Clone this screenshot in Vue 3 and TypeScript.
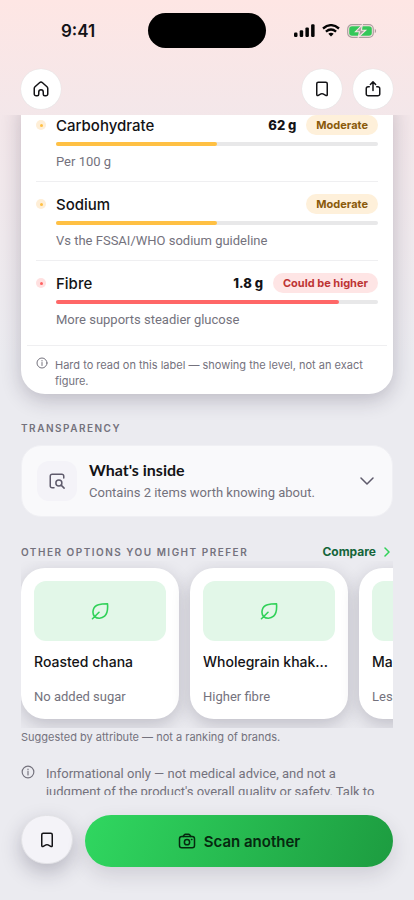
<script setup lang="ts">
type Tone = 'amber' | 'red'

interface Nutrient {
  name: string
  value: string
  level: string
  tone: Tone
  percent: number
  note: string
}

interface Option {
  name: string
  benefit: string
}

const nutrients: Nutrient[] = [
  { name: 'Carbohydrate', value: '62 g', level: 'Moderate', tone: 'amber', percent: 50, note: 'Per 100 g' },
  { name: 'Sodium', value: '', level: 'Moderate', tone: 'amber', percent: 50, note: 'Vs the FSSAI/WHO sodium guideline' },
  { name: 'Fibre', value: '1.8 g', level: 'Could be higher', tone: 'red', percent: 88, note: 'More supports steadier glucose' },
]

const options: Option[] = [
  { name: 'Roasted chana', benefit: 'No added sugar' },
  { name: 'Wholegrain khakhra', benefit: 'Higher fibre' },
  { name: 'Masala makhana', benefit: 'Less sodium' },
]
</script>

<template>
  <div class="screen">
    <header class="top">
      <div class="status">
        <span class="time">9:41</span>
        <span class="island"></span>
        <span class="signals">
          <svg width="21" height="13" viewBox="0 0 21 13" fill="#050505">
            <rect x="0" y="8.500" width="3.500" height="4.500" rx="1.2" />
            <rect x="5.700" y="6.200" width="3.500" height="6.800" rx="1.2" />
            <rect x="11.400" y="3.400" width="3.500" height="9.600" rx="1.2" />
            <rect x="17.100" y="0.200" width="3.500" height="12.800" rx="1.2" />
          </svg>
          <svg width="18" height="13" viewBox="0 0 18 13" fill="none" stroke="#050505" stroke-width="2.300">
            <path d="M1 4.500Q9-2.200 17 4.500" />
            <path d="M3.900 7.600Q9 3.400 14.100 7.600" />
            <path d="M6.300 9.700Q9 7.700 11.700 9.700L9 12.600Z" fill="#050505" stroke="none" />
          </svg>
          <svg width="30" height="14" viewBox="0 0 30 14">
            <rect x="0.700" y="0.700" width="25.600" height="12.600" rx="4.300" fill="none" stroke="#ad9fa0" stroke-width="1.200" />
            <path d="M27.800 4.800v4.400c1.800-.7 1.800-3.700 0-4.400z" fill="#ad9fa0" />
            <rect x="2.200" y="2.200" width="22.600" height="9.600" rx="2.800" fill="#34c759" />
            <path d="M15.300 0.800L8.500 7.700h4L11.300 13.200 18.700 6.200h-4.300z" fill="#ad9fa0" stroke="#f8e7e6" stroke-width="1.100" />
          </svg>
        </span>
      </div>
      <nav class="actions">
        <button class="round" type="button" aria-label="Home">
          <svg width="18" height="18" viewBox="0 0 24 24" class="line">
            <path d="M5.500 21H7a2 2 0 0 0 2-2v-3a3 3 0 0 1 6 0v3a2 2 0 0 0 2 2h1.500a2.500 2.500 0 0 0 2.500-2.500v-7.300a3 3 0 0 0-1-2.200l-6-5.400a3 3 0 0 0-4 0L4 9a3 3 0 0 0-1 2.200v7.300A2.500 2.500 0 0 0 5.500 21z" />
          </svg>
        </button>
        <span class="spacer"></span>
        <button class="round" type="button" aria-label="Save">
          <svg width="18" height="18" viewBox="0 0 24 24" class="line">
            <path d="M5 5a2 2 0 0 1 2-2h10a2 2 0 0 1 2 2v14.500a1.300 1.300 0 0 1-2 1.100l-3.600-2a3 3 0 0 0-2.800 0l-3.600 2a1.300 1.300 0 0 1-2-1.100z" />
          </svg>
        </button>
        <button class="round" type="button" aria-label="Share">
          <svg width="18" height="18" viewBox="0 0 24 24" class="line">
            <path d="M12 14V3M8.500 6L12 2.500 15.500 6M7 9H5.500A2.500 2.500 0 0 0 3 11.500v7A2.500 2.500 0 0 0 5.500 21h13a2.500 2.500 0 0 0 2.500-2.500v-7A2.500 2.500 0 0 0 18.500 9H17" />
          </svg>
        </button>
      </nav>
    </header>

    <main class="content">
      <section class="facts">
        <ul class="rows">
          <li v-for="n in nutrients" :key="n.name" class="row" :class="n.tone">
            <span class="dot"></span>
            <div class="detail">
              <div class="line-top">
                <span class="name">{{ n.name }}</span>
                <span v-if="n.value" class="value">{{ n.value }}</span>
                <span class="pill">{{ n.level }}</span>
              </div>
              <div class="track"><div class="fill" :style="{ width: n.percent + '%' }"></div></div>
              <p class="note">{{ n.note }}</p>
            </div>
          </li>
        </ul>
        <div class="caveat">
          <svg width="12" height="12" viewBox="0 0 24 24" class="line">
            <circle cx="12" cy="12" r="10" /><path d="M12 11v6M12 7v1" />
          </svg>
          <p>Hard to read on this label — showing the level, not an exact figure.</p>
        </div>
      </section>

      <h2 class="label transparency">TRANSPARENCY</h2>
      <button class="inside" type="button" aria-expanded="false">
        <span class="tile">
          <svg width="18" height="18" viewBox="0 0 24 24" class="line">
            <path d="M8 21H5.500A2.500 2.500 0 0 1 3 18.500v-13A2.500 2.500 0 0 1 5.500 3h13A2.500 2.500 0 0 1 21 5.500V8" />
            <circle cx="14.500" cy="14.500" r="4" /><path d="M17.500 17.500L21.500 21.500" />
          </svg>
        </span>
        <span class="inside-text">
          <span class="inside-title">What's inside</span>
          <span class="inside-sub">Contains 2 items worth knowing about.</span>
        </span>
        <svg class="line chevron" width="14" height="8" viewBox="0 0 14 8"><path d="M1 1l6 6 6-6" /></svg>
      </button>

      <div class="options-head">
        <h2 class="label">OTHER OPTIONS YOU MIGHT PREFER</h2>
        <a href="#compare" class="compare">Compare
          <svg width="6" height="10" viewBox="0 0 6 10"><path d="M1 1l4 4-4 4" /></svg>
        </a>
      </div>
      <div class="carousel">
        <article v-for="o in options" :key="o.name" class="option">
          <div class="thumb">
            <svg width="18" height="18" viewBox="0 0 18 18" class="line leaf">
              <path d="M1.500 16.700L8 10.300M3.600 14.600C.9 11.500 1.300 4.200 7.500 2.700 10.500 2 13.500 1.900 16.500 1.800 16.900 6.500 16.700 11.500 13.600 14.200 10.700 16.800 6.300 16.900 3.600 14.600" />
            </svg>
          </div>
          <h3>{{ o.name }}</h3>
          <p>{{ o.benefit }}</p>
        </article>
      </div>
      <p class="basis">Suggested by attribute — not a ranking of brands.</p>
      <div class="disclaimer">
        <svg width="14" height="14" viewBox="0 0 24 24" class="line">
          <circle cx="12" cy="12" r="10" /><path d="M12 11v6M12 7v1" />
        </svg>
        <p>Informational only — not medical advice, and not a judgment of the product's overall quality or safety. Talk to your doctor.</p>
      </div>
    </main>

    <footer class="bottom">
      <button class="save" type="button" aria-label="Save product">
        <svg width="18" height="18" viewBox="0 0 24 24" class="line">
          <path d="M5 5a2 2 0 0 1 2-2h10a2 2 0 0 1 2 2v14.500a1.300 1.300 0 0 1-2 1.100l-3.600-2a3 3 0 0 0-2.800 0l-3.600 2a1.300 1.300 0 0 1-2-1.100z" />
        </svg>
      </button>
      <button class="scan" type="button">
        <svg width="18" height="18" viewBox="0 0 24 24" class="line">
          <rect x="2" y="6" width="20" height="15" rx="3" />
          <path d="M7 6l1.300-2.200A2 2 0 0 1 10 3h4a2 2 0 0 1 1.700.8L17 6M18 10h.5" />
          <circle cx="12" cy="13.500" r="3.500" />
        </svg>
        Scan another
      </button>
    </footer>
  </div>
</template>

<style>
body {
  background: #ebebf0;
}
</style>

<style scoped>
.screen {
  height: 100vh;
  display: flex;
  flex-direction: column;
  overflow: hidden;
  background: linear-gradient(180deg, #fee6e4 0, #f3e7ea 120px, #ebebf0 360px);
  color: #131316;
  font-family: Inter, "Liberation Sans", sans-serif;
}
h2, h3, p, ul {
  margin: 0;
  padding: 0;
}
button {
  border: 0;
  padding: 0;
  color: inherit;
  font: inherit;
}
.line {
  flex: none;
  fill: none;
  stroke: currentColor;
  stroke-width: 2;
  stroke-linecap: round;
  stroke-linejoin: round;
}
.top {
  flex: none;
  padding: 13px 21px 6px;
}
.status {
  display: grid;
  grid-template-columns: 1fr 118px 1fr;
  align-items: center;
  height: 35px;
}
.time {
  padding-left: 40px;
  font-size: 17px;
  font-weight: 600;
}
.island {
  height: 35px;
  border-radius: 18px;
  background: #000;
}
.signals {
  display: flex;
  align-items: center;
  justify-content: flex-end;
  gap: 7px;
  padding-right: 16px;
}
.actions {
  display: flex;
  gap: 11px;
  margin-top: 21px;
}
.spacer {
  flex: 1;
}
.round {
  display: grid;
  place-items: center;
  width: 40px;
  height: 40px;
  border-radius: 50%;
  background: #fff;
  box-shadow: 0 0 1px #cfdcdc;
}
.content {
  flex: 1;
  min-height: 0;
  overflow: hidden;
  padding: 0 21px;
}
.facts {
  margin-top: -13px;
  padding: 0 6px 5px;
  border-radius: 0 0 24px 24px;
  background: #fff;
  box-shadow: 0 6px 20px rgba(40, 35, 60, 0.24);
}
.rows {
  list-style: none;
  padding: 0 9px 6px;
}
.row {
  display: flex;
  gap: 10px;
  padding: 13px 0 10px;
}
.row + .row {
  border-top: 1px solid #efeff1;
  padding-top: 12px;
}
.dot {
  display: grid;
  place-items: center;
  flex: none;
  width: 10px;
  height: 10px;
  margin-top: 5px;
  border-radius: 50%;
  background: #feeed6;
}
.dot::before {
  content: "";
  width: 3px;
  height: 3px;
  border-radius: 50%;
  background: #ffc043;
}
.red .dot {
  background: #ffe0e0;
}
.red .dot::before {
  background: #ff6161;
}
.detail {
  flex: 1;
}
.line-top {
  display: flex;
  align-items: center;
  height: 20px;
}
.name {
  flex: 1;
  font-size: 15px;
  font-weight: 500;
}
.value {
  margin-right: 10px;
  font-size: 13px;
  font-weight: 800;
}
.pill {
  padding: 0 10px;
  border-radius: 10px;
  background: #fef0da;
  color: #8a5a0b;
  font-size: 11px;
  font-weight: 700;
  line-height: 20px;
}
.red .pill {
  background: #fee5e5;
  color: #bd3434;
}
.track {
  height: 4px;
  margin-top: 7px;
  border-radius: 2px;
  background: #e8e8e9;
}
.fill {
  height: 100%;
  border-radius: 2px;
  background: #ffc043;
}
.red .fill {
  background: #ff6767;
}
.note,
.inside-sub,
.option p,
.disclaimer {
  color: #74727d;
  font-family: Roboto, sans-serif;
  font-size: 13px;
  line-height: 18px;
}
.note {
  margin-top: 7px;
}
.caveat {
  display: flex;
  gap: 7px;
  padding: 11px 9px 0;
  border-top: 1px solid #efeff1;
  color: #74727d;
  font-size: 11px;
  line-height: 16px;
}
.label {
  color: #74727d;
  font-size: 10px;
  font-weight: 600;
  letter-spacing: 1.5px;
  line-height: 16px;
}
.transparency {
  margin-top: 26px;
}
.inside {
  display: flex;
  align-items: center;
  gap: 12px;
  width: 100%;
  height: 72px;
  margin-top: 9px;
  padding: 0 18px 0 15px;
  border: 1px solid #f0f0f4;
  border-radius: 20px;
  background: #f9f9fb;
  text-align: left;
}
.tile {
  display: grid;
  place-items: center;
  width: 40px;
  height: 40px;
  border-radius: 12px;
  background: #f4f3f8;
  color: #5e5a6b;
}
.inside-text {
  display: flex;
  flex: 1;
  flex-direction: column;
  gap: 4px;
}
.inside-title {
  font-family: Lato, sans-serif;
  font-size: 16px;
  font-weight: 700;
  line-height: 20px;
}
.chevron {
  color: #5e5a6b;
  stroke-width: 1.500;
}
.options-head {
  display: flex;
  align-items: center;
  justify-content: space-between;
  margin-top: 26px;
}
.compare {
  display: flex;
  align-items: center;
  gap: 8px;
  padding-right: 3px;
  color: #14653a;
  font-size: 12px;
  font-weight: 700;
  line-height: 18px;
  text-decoration: none;
}
.compare svg {
  fill: none;
  stroke: #30d158;
  stroke-width: 1.500;
  stroke-linecap: round;
}
.carousel {
  display: flex;
  gap: 11px;
  padding: 7px 0 9px;
  overflow-x: auto;
  scrollbar-width: none;
}
.option {
  box-sizing: border-box;
  flex: none;
  width: 158px;
  height: 151px;
  padding: 13px;
  border-radius: 24px;
  background: #fff;
  box-shadow: 0 6px 18px rgba(40, 35, 60, 0.22);
}
.thumb {
  display: grid;
  place-items: center;
  height: 60px;
  border-radius: 12px;
  background: #e2f7e8;
  color: #30d158;
}
.leaf {
  stroke-width: 1.600;
}
.option h3 {
  margin-top: 11px;
  overflow: hidden;
  font-size: 14px;
  font-weight: 500;
  line-height: 20px;
  text-overflow: ellipsis;
  white-space: nowrap;
}
.option p {
  margin-top: 16px;
}
.basis {
  color: #74727d;
  font-size: 11px;
  line-height: 18px;
}
.disclaimer {
  display: flex;
  gap: 11px;
  margin-top: 19px;
}
.bottom {
  display: flex;
  flex: none;
  align-items: flex-start;
  gap: 12px;
  padding: 20px 21px 33px;
}
.save {
  display: grid;
  place-items: center;
  width: 52px;
  height: 49px;
  border: 1px solid #e2e2e6;
  border-radius: 26px;
  background: #f4f3f8;
  box-shadow: 0 8px 20px rgba(40, 35, 60, 0.26);
}
.scan {
  display: flex;
  flex: 1;
  align-items: center;
  justify-content: center;
  gap: 8px;
  height: 52px;
  border-radius: 26px;
  background: linear-gradient(110deg, #30d760, #1d9c40);
  box-shadow: 0 8px 20px rgba(40, 35, 60, 0.14);
  color: #06280f;
  font-size: 15px;
  font-weight: 600;
}
</style>
